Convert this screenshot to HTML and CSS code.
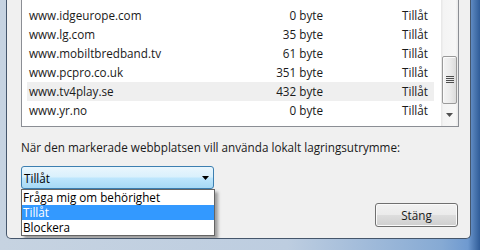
FILE: index.html
```html
<!DOCTYPE html>
<html lang="sv">
<head>
<meta charset="utf-8">
<title>Lokalt lagringsutrymme</title>
<link rel="stylesheet" href="styles.css">
</head>
<body>
<div class="window">
  <div class="dialog">
    <div class="list">
      <div class="rows">
        <div class="row"><span class="name">www.idgeurope.com</span><span class="size">0 byte</span><span class="perm">Tillåt</span></div>
        <div class="row"><span class="name">www.lg.com</span><span class="size">35 byte</span><span class="perm">Tillåt</span></div>
        <div class="row"><span class="name">www.mobiltbredband.tv</span><span class="size">61 byte</span><span class="perm">Tillåt</span></div>
        <div class="row"><span class="name">www.pcpro.co.uk</span><span class="size">351 byte</span><span class="perm">Tillåt</span></div>
        <div class="row sel"><span class="name">www.tv4play.se</span><span class="size">432 byte</span><span class="perm">Tillåt</span></div>
        <div class="row"><span class="name">www.yr.no</span><span class="size">0 byte</span><span class="perm">Tillåt</span></div>
      </div>
      <div class="scrollbar">
        <div class="sb-space"></div>
        <div class="thumb">
          <svg width="8" height="8" viewBox="0 0 8 8"><path d="M0 0.5H8M0 2.5H8M0 4.5H8M0 6.5H8" stroke="#4e4e4e" stroke-width="1"/></svg>
        </div>
        <div class="sb-fill"></div>
        <div class="sb-down">
          <svg width="7" height="4" viewBox="0 0 7 4"><path d="M0 0H7L3.5 4Z" fill="#505050"/></svg>
        </div>
      </div>
    </div>
    <p class="label">När den markerade webbplatsen vill använda lokalt lagringsutrymme:</p>
    <div class="combo-wrap">
      <div class="combo">
        <span class="combo-text">Tillåt</span>
        <svg class="combo-arrow" width="7" height="4" viewBox="0 0 7 4"><path d="M0 0H7L3.5 4Z" fill="#000"/></svg>
      </div>
      <ul class="dropdown">
        <li class="opt">Fråga mig om behörighet</li>
        <li class="opt hl">Tillåt</li>
        <li class="opt">Blockera</li>
      </ul>
    </div>
    <div class="actions">
      <button class="btn">Stäng</button>
    </div>
  </div>
</div>
</body>
</html>
```
FILE: styles.css
```css
html, body {
  margin: 0;
  padding: 0;
}
body {
  width: 480px;
  height: 250px;
  overflow: hidden;
}
.window {
  width: 480px;
  height: 250px;
  box-sizing: border-box;
  padding: 0 9px 11px 6px;
  background: linear-gradient(90deg, #c6d3e1 0%, #bdcde0 60%, #86aad4 92%, #6f9ad0 97.5%, #2f5c98 100%);
}
.dialog {
  height: 100%;
  box-sizing: border-box;
  background: #f0f0f0;
  border: 1px solid #45566b;
  border-top: 0;
  border-radius: 0 0 5px 5px;
  padding: 0 11px 0 14px;
  overflow: hidden;
  display: flex;
  flex-direction: column;
  font-family: "Open Sans", "Noto Sans", sans-serif;
  font-size: 11.7px;
  color: #1a1a1a;
}
.list {
  margin-top: -14px;
  height: 141px;
  box-sizing: border-box;
  border: 1px solid #8b8e94;
  background: #fff;
  display: flex;
  flex-shrink: 0;
}
.rows {
  flex: 1;
  padding: 19px 7px 6px 5px;
}
.row {
  display: grid;
  grid-template-columns: 200px 94px 1fr;
  height: 19px;
  line-height: 19px;
  padding-left: 2px;
  white-space: nowrap;
}
.row.sel {
  background: #efefef;
}
.size {
  text-align: right;
}
.perm {
  padding-left: 79px;
}
.scrollbar {
  width: 17px;
  display: flex;
  flex-direction: column;
  background: linear-gradient(90deg, #e6e6e6 0%, #f4f4f4 15%, #f7f7f7 85%, #e9e9e9 100%);
}
.sb-space {
  height: 69px;
}
.thumb {
  height: 48px;
  margin: 0 1px;
  box-sizing: border-box;
  border: 1px solid #9a9a9a;
  border-radius: 2px;
  background: linear-gradient(90deg, #f4f4f4 0%, #ececec 50%, #dcdcdc 100%);
  box-shadow: inset 1px 1px 0 #fbfbfb;
  display: flex;
  align-items: center;
  justify-content: center;
}
.sb-fill {
  flex: 1;
}
.sb-down {
  height: 17px;
  display: flex;
  justify-content: center;
  align-items: flex-start;
  box-sizing: border-box;
}
.sb-down svg {
  margin-top: 4px;
}
.label {
  margin: 13px 0 0;
  line-height: 15px;
  white-space: nowrap;
}
.combo-wrap {
  position: relative;
  margin-top: 11px;
  width: 193px;
}
.combo {
  height: 23px;
  box-sizing: border-box;
  border: 1px solid #3c7fb1;
  border-radius: 3px;
  background: linear-gradient(180deg, #eaf6fd 0%, #d9f0fc 48%, #bee6fd 52%, #a7d9f5 100%);
  display: flex;
  align-items: center;
  padding: 0 4px 0 2px;
  color: #000;
}
.combo-text {
  flex: 1;
}
.dropdown {
  position: absolute;
  left: 0;
  top: 23px;
  width: 194px;
  box-sizing: border-box;
  margin: 0;
  padding: 0;
  list-style: none;
  background: #fff;
  border: 1px solid #646464;
  box-shadow: 3px 3px 3px rgba(0, 0, 0, 0.35);
  color: #000;
  z-index: 2;
}
.opt {
  height: 15px;
  line-height: 15px;
  padding-left: 1px;
  white-space: nowrap;
}
.opt.hl {
  background: #3399ff;
  color: #fff;
}
.actions {
  display: flex;
  justify-content: flex-end;
  margin-top: 14px;
  padding-right: 1px;
}
.btn {
  width: 83px;
  height: 24px;
  box-sizing: border-box;
  border: 1px solid #707070;
  border-radius: 3px;
  background: linear-gradient(180deg, #f2f2f2 0%, #ebebeb 48%, #dddddd 52%, #cfcfcf 100%);
  box-shadow: inset 0 0 0 1px #fafafa;
  font-family: "Open Sans", "Noto Sans", sans-serif;
  font-size: 11.7px;
  color: #1a1a1a;
  padding: 0;
}
```
